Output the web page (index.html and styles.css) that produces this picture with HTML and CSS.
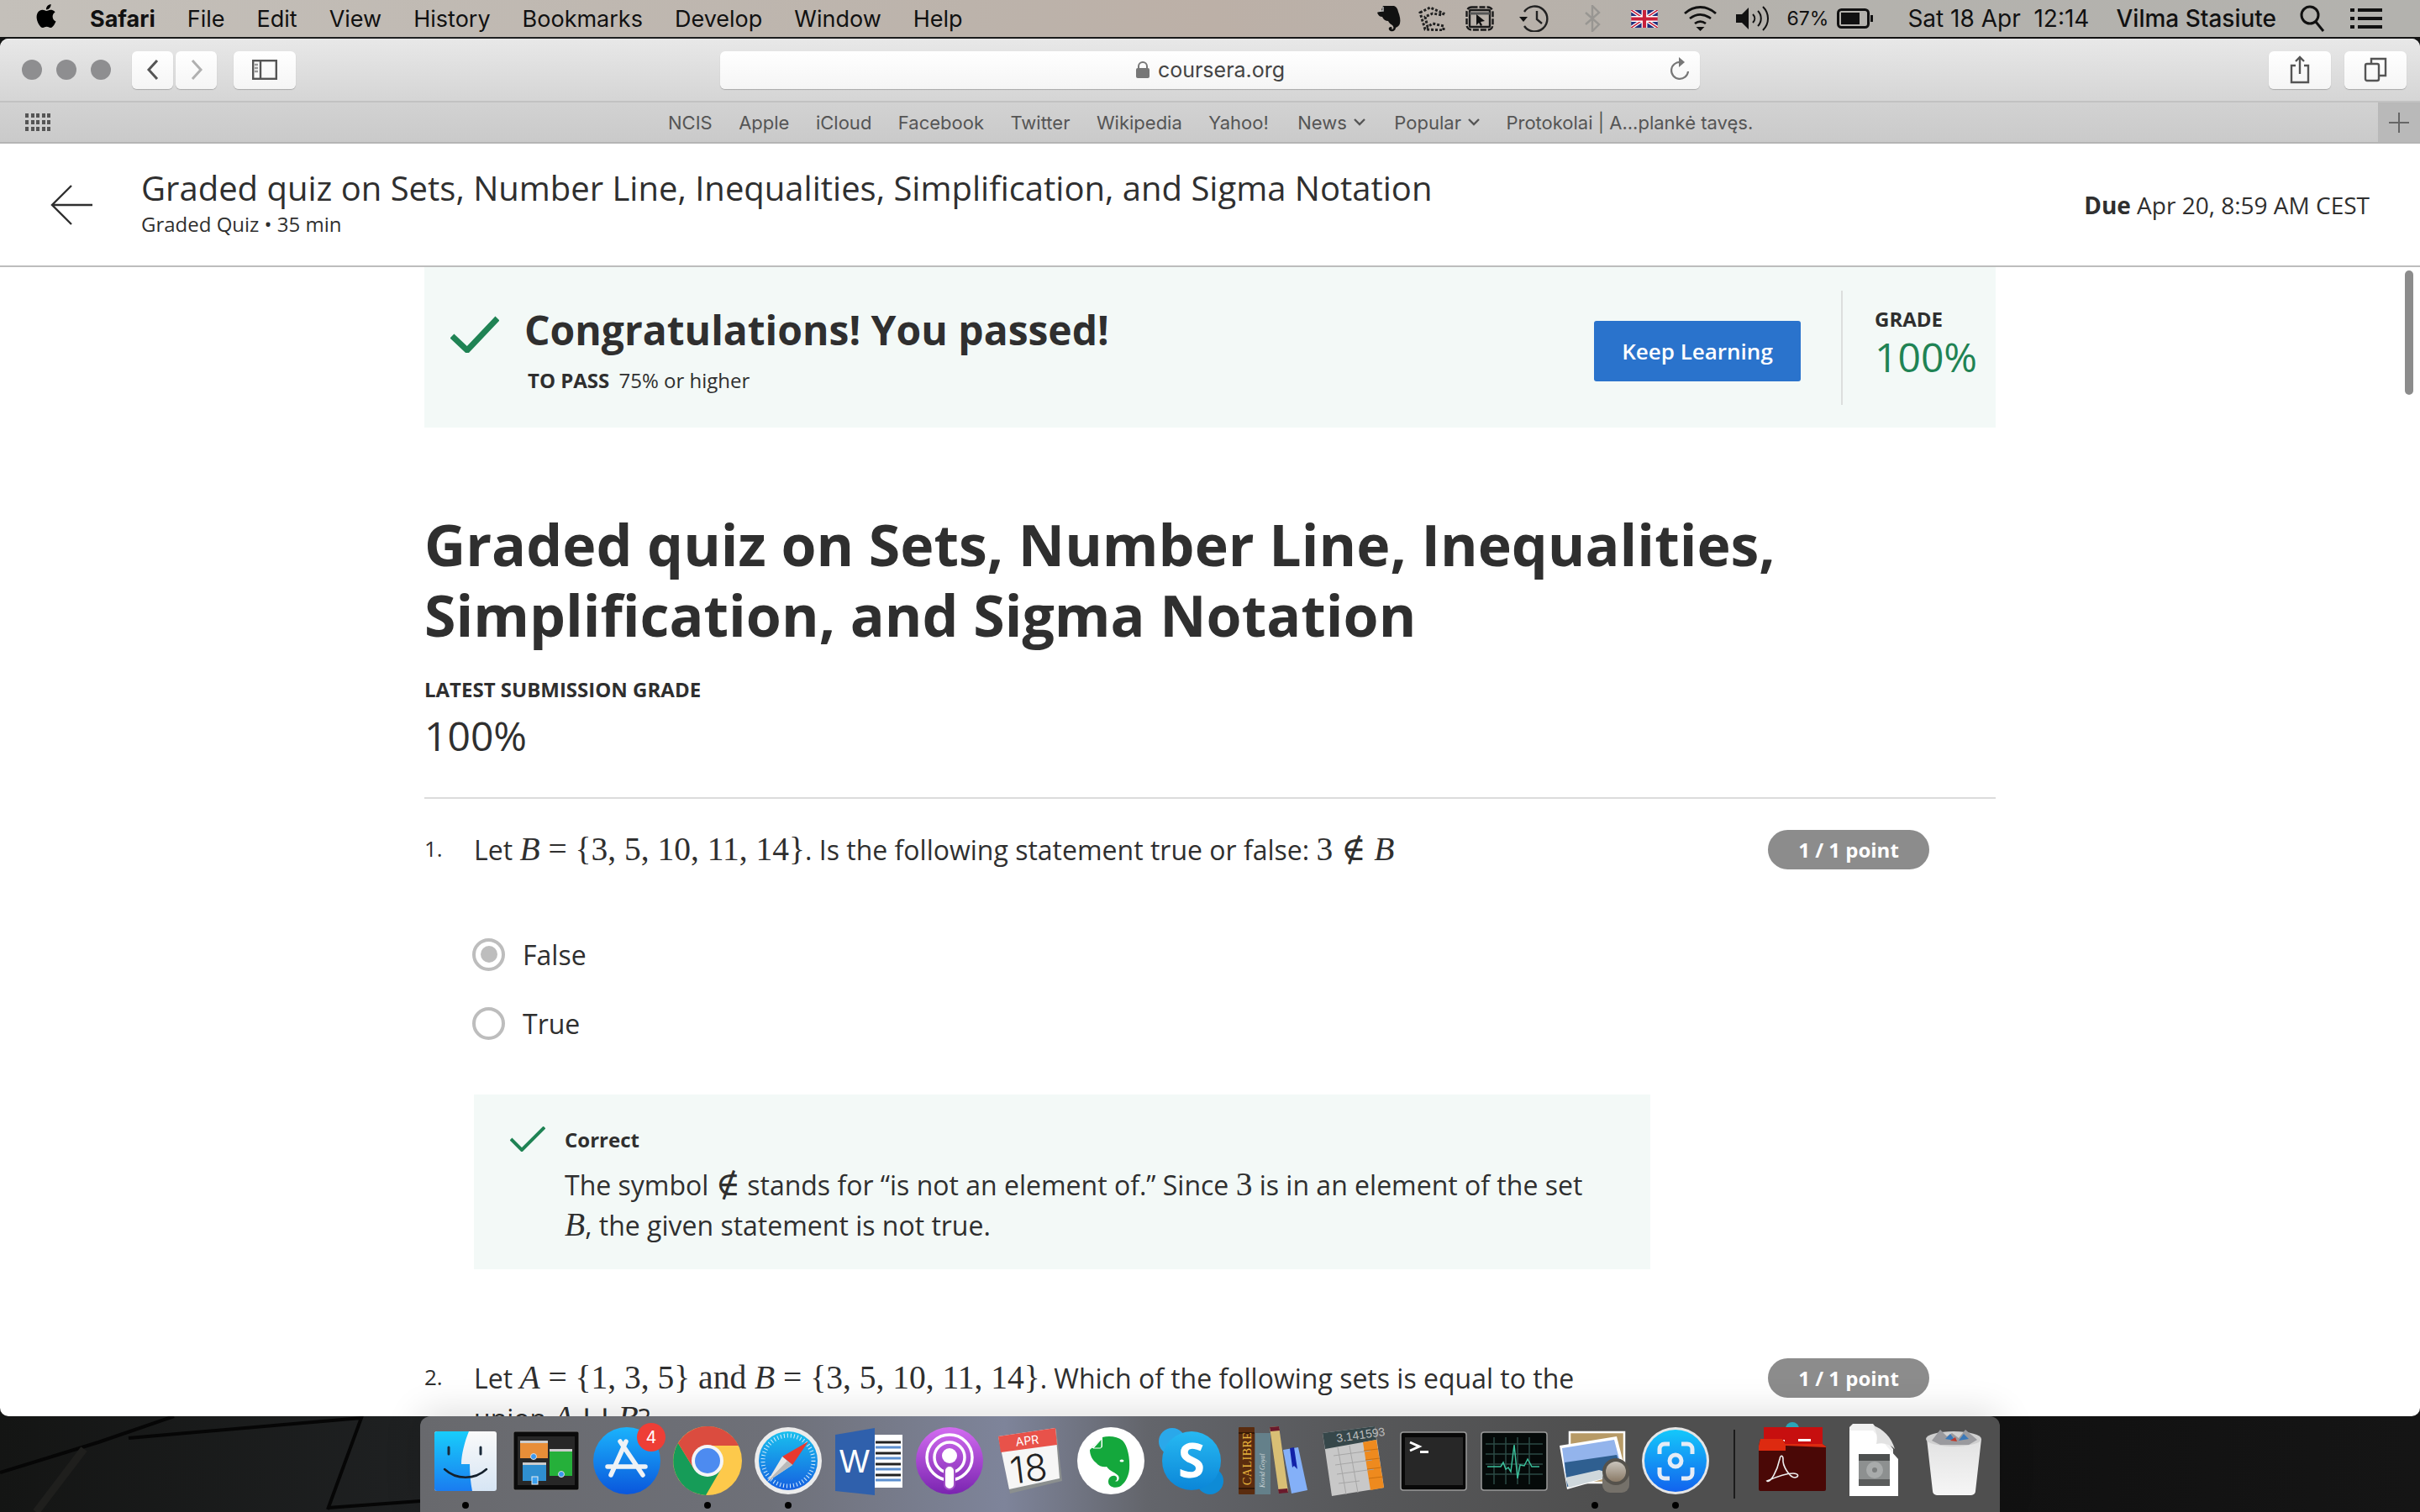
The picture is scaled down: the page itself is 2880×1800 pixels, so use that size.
FILE: index.html
```html
<!DOCTYPE html>
<html lang="en">
<head>
  <meta charset="UTF-8">
  <title>Graded quiz on Sets, Number Line, Inequalities, Simplification, and Sigma Notation</title>
  <link rel="stylesheet" href="styles.css">
</head>
<body>
  <!-- desktop wallpaper, only visible left of the dock -->
  <svg class="wall" width="500" height="114" viewBox="0 0 500 114" fill="none">
    <path d="M0 67L117 31 207 0M153 26L430 2 390 111M390 109L500 101" stroke="#060606" stroke-width="4"/>
    <path d="M100 39L43 114" stroke="#1f1f1d" stroke-width="9"/>
  </svg>

  <!-- mac menu bar -->
  <div class="menubar">
    <div class="menu-left">
      <svg class="apple" viewBox="0 0 24 24"><path d="M12.152 6.896c-.948 0-2.415-1.078-3.96-1.04-2.04.027-3.91 1.183-4.961 3.014-2.117 3.675-.546 9.103 1.519 12.09 1.013 1.454 2.208 3.09 3.792 3.039 1.52-.065 2.09-.987 3.935-.987 1.831 0 2.35.987 3.96.948 1.637-.026 2.676-1.48 3.676-2.948 1.156-1.688 1.636-3.325 1.662-3.415-.039-.013-3.182-1.221-3.22-4.857-.026-3.04 2.48-4.494 2.597-4.559-1.429-2.09-3.623-2.324-4.39-2.376-2-.156-3.675 1.09-4.61 1.09zM15.53 3.83c.843-1.012 1.4-2.427 1.245-3.83-1.207.052-2.662.805-3.532 1.818-.78.896-1.454 2.338-1.273 3.714 1.338.104 2.715-.688 3.559-1.701"/></svg>
      <b>Safari</b><span>File</span><span>Edit</span><span>View</span><span>History</span><span>Bookmarks</span><span>Develop</span><span>Window</span><span>Help</span>
    </div>
    <div class="menu-right">
      <svg class="st" width="28" height="32" viewBox="0 0 28 32"><path d="M7 1h13c3 1 4 3 5 7 2 5 3 10 2 14-1 3-3 4-5 5 0 3-3 5-6 4-3-1-3-5 0-5 2 0 2 2 1 3 3 0 3-3 1-5-2-1-4-3-5-5-3 0-6-2-7-5-3 0-5-2-6-5 1-1 3-1 5-1 0-3 1-5 2-7z" fill="#111"/><path d="M7 2v5H2" fill="none" stroke="#bbb" stroke-width="1.500"/></svg>
      <svg class="st sp-s" width="32" height="30" viewBox="0 0 32 30" fill="none" stroke="#222" stroke-width="3" stroke-dasharray="3 2"><path d="M2 8L14 2l16 7-1 2-12-2-9 4 3 12 6-4 13 3v5L8 28z"/></svg>
      <svg class="st sp-m" width="34" height="30" viewBox="0 0 34 30" fill="none" stroke="#1a1a1a" stroke-width="2.400"><rect x="1.500" y="1.500" width="31" height="27" rx="6" stroke-dasharray="7 2"/><rect x="5" y="5" width="24" height="20" rx="1"/><path d="M5 9h24" stroke="#555" stroke-width="3"/><path d="M13 10l10 8-5 1 2 4-2 1-2-4-3 3z" fill="#111" stroke="none"/></svg>
      <svg class="st sp-l" width="37" height="32" viewBox="0 0 37 32" fill="none" stroke="#222" stroke-width="2.400"><path d="M6 8a15 15 0 1 1 0 17"/><path d="M21 7v10l6 5"/><path d="M0 14h10l-5 6z" fill="#111" stroke="none"/></svg>
      <svg class="st sp-xl" width="19" height="32" viewBox="0 0 19 32" fill="none" stroke="#989692" stroke-width="2.400"><path d="M1 9l16 14-8 8V1l8 8L1 23"/></svg>
      <svg class="st sp-f" width="32" height="21" viewBox="0 0 60 40"><rect width="60" height="40" fill="#1f2e7c"/><path d="M0 0l60 40M60 0L0 40" stroke="#fff" stroke-width="8"/><path d="M0 0l60 40M60 0L0 40" stroke="#c8203a" stroke-width="3"/><path d="M30 0v40M0 20h60" stroke="#fff" stroke-width="13"/><path d="M30 0v40M0 20h60" stroke="#c8203a" stroke-width="8"/></svg>
      <svg class="st sp-l" width="41" height="30" viewBox="0 0 41 30" fill="none" stroke="#111" stroke-width="2.800"><path d="M2 9c11-10 26-10 37 0M8 15c8-6 17-6 25 0M14 21c4-3 9-3 13 0"/><path d="M20.500 30l-5-5h10z" fill="#111" stroke="none"/></svg>
      <svg class="st sp-s" width="41" height="30" viewBox="0 0 41 30" fill="none" stroke="#111" stroke-width="2"><path d="M1 10h7l8-8v26l-8-8H1z" fill="#111" stroke="none"/><path d="M21 10c3 3 3 7 0 10M27 6c5 5 5 13 0 18M33 1c8 8 8 20 0 28"/></svg>
      <span class="pct">67%</span>
      <svg class="st batt" width="44" height="24" viewBox="0 0 44 24"><rect x="1.500" y="1.500" width="36" height="21" rx="4" fill="none" stroke="#111" stroke-width="3"/><rect x="5" y="5" width="22" height="14" fill="#111"/><rect x="40" y="8" width="3" height="8" fill="#111"/></svg>
      <span class="date">Sat 18 Apr&nbsp; 12:14</span>
      <span class="user">Vilma Stasiute</span>
      <svg class="st sp-u" width="30" height="32" viewBox="0 0 30 32" fill="none" stroke="#111" stroke-width="3"><circle cx="12" cy="12" r="10"/><path d="M19 20l9 11"/></svg>
      <svg class="st sp-l" width="38" height="26" viewBox="0 0 38 26" fill="#111"><rect y="1" width="5" height="4"/><rect x="9" y="1" width="29" height="4"/><rect y="11" width="5" height="4"/><rect x="9" y="11" width="29" height="4"/><rect y="21" width="5" height="4"/><rect x="9" y="21" width="29" height="4"/></svg>
    </div>
  </div>

  <div class="window">
    <div class="toolbar">
      <div class="lights"><i></i><i></i><i></i></div>
      <div class="nav-btns">
        <button class="tb-btn nav"><svg width="16" height="26" viewBox="0 0 16 26" fill="none" stroke="#555" stroke-width="3"><path d="M13 2L3 13l10 11"/></svg></button>
        <button class="tb-btn nav"><svg width="16" height="26" viewBox="0 0 16 26" fill="none" stroke="#b0b0b0" stroke-width="3"><path d="M3 2l10 11L3 24"/></svg></button>
      </div>
      <button class="tb-btn side"><svg width="30" height="24" viewBox="0 0 30 24" fill="none" stroke="#555" stroke-width="2.400"><rect x="1.200" y="1.200" width="27.600" height="21.600"/><path d="M10 1v22"/><path d="M3 6h4M3 10h4M3 14h4" stroke="#999"/></svg></button>
      <div class="address">
        <span class="url"><svg width="18" height="22" viewBox="0 0 18 22"><path d="M4 10V7a5 5 0 0 1 10 0v3" fill="none" stroke="#777" stroke-width="2"/><rect x="1" y="9" width="16" height="12" rx="2" fill="#777"/></svg>coursera.org</span>
        <svg class="reload" width="24" height="32" viewBox="0 0 24 32" fill="none" stroke="#777" stroke-width="2.200"><path d="M13 7a10 10 0 1 0 9 11"/><path d="M11 1l7 6-7 6z" fill="#777" stroke="none"/></svg>
      </div>
      <button class="tb-btn act share"><svg width="24" height="34" viewBox="0 0 24 34" fill="none" stroke="#555" stroke-width="2.400"><path d="M7 12H2v20h20V12h-5M12 22V2M7 7l5-5 5 5"/></svg></button>
      <button class="tb-btn act"><svg width="28" height="30" viewBox="0 0 28 30" fill="none" stroke="#555" stroke-width="2.400"><rect x="2" y="8" width="16" height="20" rx="2"/><path d="M9 8V2h17v20h-8"/></svg></button>
    </div>

    <div class="favbar">
      <div class="grid-icon"><i></i><i></i><i></i><i></i><i></i><i></i><i></i><i></i><i></i><i></i><i></i><i></i><i></i><i></i><i></i></div>
      <div class="favs">
        <span>NCIS</span><span>Apple</span><span>iCloud</span><span>Facebook</span><span>Twitter</span><span>Wikipedia</span><span>Yahoo!</span>
        <span class="fav-menu">News <svg width="14" height="9" viewBox="0 0 14 9" fill="none" stroke="#555" stroke-width="2.400"><path d="M1 1l6 6 6-6"/></svg></span>
        <span class="fav-menu">Popular <svg width="14" height="9" viewBox="0 0 14 9" fill="none" stroke="#555" stroke-width="2.400"><path d="M1 1l6 6 6-6"/></svg></span>
        <span>Protokolai | A...plankė tavęs.</span>
      </div>
      <div class="newtab"><svg width="24" height="24" viewBox="0 0 24 24" stroke="#666" stroke-width="2"><path d="M12 0v24M0 12h24"/></svg></div>
    </div>

    <div class="page">
      <header class="quiz-head">
        <svg class="back" width="50" height="48" viewBox="0 0 50 48" fill="none" stroke="#2f2f2f" stroke-width="2.400"><path d="M25 1L2 24l23 23M2 24h48"/></svg>
        <div class="quiz-titles">
          <div class="quiz-title">Graded quiz on Sets, Number Line, Inequalities, Simplification, and Sigma Notation</div>
          <div class="quiz-sub">Graded Quiz • 35 min</div>
        </div>
        <div class="due"><b>Due</b> Apr 20, 8:59 AM CEST</div>
      </header>

      <div class="scroll">
        <div class="column">
          <section class="banner">
            <svg class="banner-check" width="58" height="44" viewBox="0 0 58 44" fill="none" stroke="#1f8354" stroke-width="7"><path d="M2 24l18 17L56 3"/></svg>
            <div class="banner-text">
              <div class="congrats">Congratulations! You passed!</div>
              <div class="topass"><b>TO PASS</b> 75% or higher</div>
            </div>
            <button class="keep">Keep Learning</button>
            <div class="grade-box">
              <div class="grade-label">GRADE</div>
              <div class="grade-val">100%</div>
            </div>
          </section>

          <h1>Graded quiz on Sets, Number Line, Inequalities, Simplification, and Sigma Notation</h1>
          <div class="latest-label">LATEST SUBMISSION GRADE</div>
          <div class="latest-val">100%</div>
          <hr>

          <div class="question">
            <span class="num">1.</span>
            <div class="q-text">Let <span class="m"><i>B</i> = {3, 5, 10, 11, 14}</span>. Is the following statement true or false: <span class="m">3 ∉ <i>B</i></span></div>
            <span class="pill">1 / 1 point</span>
          </div>
          <div class="option"><span class="radio on"></span>False</div>
          <div class="option"><span class="radio"></span>True</div>
          <div class="feedback">
            <svg width="42" height="30" viewBox="0 0 42 30" fill="none" stroke="#1f8354" stroke-width="4"><path d="M1 15l13 13L41 1"/></svg>
            <div class="fb-body">
              <div class="fb-title">Correct</div>
              <div class="fb-text">The symbol <span class="m">∉</span> stands for “is not an element of.” Since <span class="m">3</span> is in an element of the set <span class="m"><i>B</i></span>, the given statement is not true.</div>
            </div>
          </div>

          <div class="question q2">
            <span class="num">2.</span>
            <div class="q-text">Let <span class="m"><i>A</i> = {1, 3, 5} and <i>B</i> = {3, 5, 10, 11, 14}</span>. Which of the following sets is equal to the union <span class="m"><i>A</i> ∪ <i>B</i></span>?</div>
            <span class="pill">1 / 1 point</span>
          </div>
        </div>
        <div class="thumb"></div>
      </div>
    </div>
  </div>

  <!-- dock -->
  <div class="dock">
    <div class="slot run"><svg viewBox="0 0 80 80">
      <defs><linearGradient id="fin" x1="0" y1="0" x2="0" y2="1"><stop offset="0" stop-color="#18cdfb"/><stop offset="1" stop-color="#1a7cf0"/></linearGradient><linearGradient id="fin2" x1="0" y1="0" x2="0" y2="1"><stop offset="0" stop-color="#fafafa"/><stop offset="1" stop-color="#d6e5f4"/></linearGradient></defs>
      <rect x="3" y="5" width="74" height="71" rx="3" fill="url(#fin2)"/>
      <path d="M6 5h38c-5 12-9 28-9 39h10c0 10 1 22 3 32H6a3 3 0 0 1-3-3V8a3 3 0 0 1 3-3z" fill="url(#fin)"/>
      <path d="M20 24v8M58 24v8" stroke="#1a2a3a" stroke-width="3" stroke-linecap="round"/>
      <path d="M15 50c14 13 36 13 50 0" fill="none" stroke="#14202c" stroke-width="2.500" stroke-linecap="round"/>
    </svg></div>
    <div class="slot"><svg viewBox="0 0 80 80">
      <rect x="1" y="5" width="78" height="70" rx="2" fill="#0b0b0b" stroke="#777"/>
      <rect x="6" y="11" width="68" height="58" fill="#272727"/>
      <rect x="9" y="16" width="33" height="21" fill="#e88e38"/><rect x="9" y="16" width="33" height="3" fill="#ccc"/>
      <rect x="44" y="26" width="27" height="32" fill="#25b03a"/><rect x="44" y="26" width="27" height="3" fill="#ccc"/>
      <rect x="12" y="42" width="28" height="22" fill="#2f8fd0"/><rect x="12" y="42" width="28" height="3" fill="#ccc"/>
      <circle cx="25" cy="35" r="3.500" fill="#3a98f0" stroke="#ddd"/><circle cx="58" cy="56" r="3.500" fill="#3a98f0" stroke="#ddd"/>
      <rect x="23" y="59" width="7" height="9" fill="#3aa0f0" stroke="#eee"/>
    </svg></div>
    <div class="slot"><svg viewBox="0 0 80 80">
      <defs><linearGradient id="app" x1="0" y1="0" x2="0" y2="1"><stop offset="0" stop-color="#1bb3fc"/><stop offset="1" stop-color="#0a56dc"/></linearGradient></defs>
      <circle cx="40" cy="40" r="40" fill="url(#app)"/>
      <path d="M39 17L21 57M32 17l27 40M17 47h45" stroke="#eef2f6" stroke-width="5.500" stroke-linecap="round" fill="none"/>
    </svg><span class="badge">4</span></div>
    <div class="slot run"><svg viewBox="0 0 80 80">
      <circle cx="40" cy="40" r="41" fill="#fdc94b"/>
      <path d="M5 19A41 41 0 0 0 38 81L56 50H24z" fill="#169c58"/>
      <path d="M5 19A41 41 0 0 1 77 22H40L24 50z" fill="#db4c3f"/>
      <circle cx="40" cy="40" r="19" fill="#f5f5f5"/><circle cx="40" cy="40" r="15" fill="#4d8bf0"/>
    </svg></div>
    <div class="slot run"><svg viewBox="0 0 80 80">
      <defs><linearGradient id="saf" x1="0" y1="0" x2="0" y2="1"><stop offset="0" stop-color="#19c0ee"/><stop offset="1" stop-color="#1660e0"/></linearGradient></defs>
      <circle cx="40" cy="40" r="40" fill="#ececec"/><circle cx="40" cy="40" r="35" fill="url(#saf)"/>
      <circle cx="40" cy="40" r="30" fill="none" stroke="#d8ecfb" stroke-width="5" stroke-dasharray="1 3"/>
      <path d="M64 17L33 35l12 10z" fill="#e8392f"/><path d="M15 65l18-30 12 10z" fill="#e6e6e6"/><path d="M15 65l30-20-6-5z" fill="#b9b9b9"/>
    </svg></div>
    <div class="slot"><svg viewBox="0 0 80 80">
      <rect x="46" y="9" width="34" height="63" fill="#fff"/>
      <path d="M48 18h30M48 31h30M48 44h30M48 57h30" stroke="#222" stroke-width="3"/><path d="M48 24h30M48 37h30M48 50h30M48 63h30" stroke="#5c8fd0" stroke-width="3"/>
      <path d="M0 9L47 1v80L0 76z" fill="#2f60ac"/><text x="23" y="54" class="word-w">W</text>
    </svg></div>
    <div class="slot"><svg viewBox="0 0 80 80">
      <defs><linearGradient id="pod" x1="0" y1="0" x2="0" y2="1"><stop offset="0" stop-color="#d26cf0"/><stop offset="1" stop-color="#7a24b0"/></linearGradient></defs>
      <circle cx="40" cy="40" r="40" fill="url(#pod)"/>
      <circle cx="40" cy="36" r="27" fill="none" stroke="#fff" stroke-width="3.500"/><circle cx="40" cy="36" r="18" fill="none" stroke="#fff" stroke-width="3.500"/>
      <circle cx="40" cy="34" r="9" fill="#fff"/><rect x="34" y="46" width="12" height="28" rx="6" fill="#fff" stroke="#a24fc7" stroke-width="2"/>
    </svg></div>
    <div class="slot"><svg viewBox="0 0 80 80">
      <path d="M3 13L71 2l7 62-62 15z" fill="#8b8f8f"/><path d="M2 11L70 1l5 60-60 13z" fill="#f6f6f6"/>
      <path d="M2 11L70 1l2 20L5 30z" fill="#e8524a"/>
      <text class="cal-m" transform="translate(37 21) rotate(-7)">APR</text>
      <text class="cal-d" transform="translate(40 65) rotate(-7)">18</text>
    </svg></div>
    <div class="slot"><svg viewBox="0 0 80 80">
      <circle cx="40" cy="40" r="40" fill="#fff"/>
      <path d="M30 12c8-2 18-1 24 4 6 6 9 21 8 34-1 10-6 18-12 21-6 2-13 0-13-6 0-5 4-8 8-7 3 1 3 6 0 6 3 2 6-2 4-6-3-4-10-5-14-11-3 1-9 0-13-5-4-3-7-9-7-15z" fill="#14a83c"/>
      <path d="M30 11L17 25h10c2 0 3-1 3-3z" fill="#fff"/><path d="M29 14L19 25h8c1 0 2-1 2-3z" fill="#14a83c" stroke="#fff" stroke-width="1"/>
      <ellipse cx="53" cy="40" rx="2.500" ry="1.500" fill="#fff"/>
    </svg></div>
    <div class="slot"><svg viewBox="0 0 80 80">
      <defs><linearGradient id="sky" x1="0" y1="0" x2="0" y2="1"><stop offset="0" stop-color="#27b9f2"/><stop offset="1" stop-color="#0b86d8"/></linearGradient></defs>
      <circle cx="17" cy="17" r="16" fill="#2aa8ea"/><circle cx="62" cy="64" r="16" fill="#0e8bd6"/><circle cx="40" cy="40" r="35" fill="url(#sky)"/>
      <text x="40" y="60" class="skype-s">S</text>
    </svg></div>
    <div class="slot"><svg viewBox="0 0 80 80">
      <rect x="0" y="0" width="19" height="80" rx="1" fill="#5a2c0f"/><path d="M0 7h19M0 73h19" stroke="#2a1205" stroke-width="1.500"/>
      <text class="cal-t" transform="translate(15 69) rotate(-90)">CALIBRE</text>
      <rect x="20" y="7" width="18" height="73" fill="#64808a"/><text class="gogol" transform="translate(31 72) rotate(-90)">Kovid Goyal</text>
      <path d="M37 0l11-1 11 78-11 1z" fill="#d9bf75"/><path d="M37 0l11-1 1 5-11 1zM47 74l11-1 1 5-11 1z" fill="#6a1a2c"/>
      <path d="M53 27l18-3 11 51-19 4z" fill="#84b0f8"/><path d="M61 25l5-1 4 26-4-4-2 2z" fill="#1222a8"/>
    </svg></div>
    <div class="slot"><svg viewBox="0 0 80 80">
      <path d="M4 7L66-1l11 73-62 10z" fill="#c8c8c8"/><path d="M4 7L66-1l2 16L7 26z" fill="#36474a"/>
      <path d="M52 18l16-3 9 57-16 3z" fill="#ee8a1e"/>
      <path d="M17 34l44-6M19 45l44-6M21 56l44-6M23 67l25-3M22 24l10 56M36 22l10 56" stroke="#a6a6a6" stroke-width="1"/>
      <path d="M53 28l17-2M55 39l17-2M57 50l17-2M59 61l17-2" stroke="#c96f10" stroke-width="1"/>
      <text class="calc-t" transform="translate(21 18) rotate(-8)">3.141593</text>
    </svg></div>
    <div class="slot"><svg viewBox="0 0 80 80">
      <rect x="1" y="6" width="78" height="69" rx="3" fill="#080808" stroke="#9a9a9a" stroke-width="1.500"/><rect x="6" y="12" width="69" height="57" fill="#272727"/>
      <path d="M12 18l11 5-11 5" fill="none" stroke="#fff" stroke-width="3"/><rect x="24" y="28" width="10" height="3" fill="#fff"/>
    </svg></div>
    <div class="slot"><svg viewBox="0 0 80 80">
      <rect x="1" y="6" width="78" height="69" rx="3" fill="#050a09" stroke="#9a9a9a" stroke-width="1.500"/>
      <path d="M6 20h68M6 32h68M6 44h68M6 56h68M16 12v56M30 12v56M44 12v56M58 12v56" stroke="#2b4a44" stroke-width="1.500"/>
      <path d="M8 47h16l3-5 3 8 3-2 3 5 4-32 4 40 3-16 5 1 4-8 5 9h9" fill="none" stroke="#3bbf9a" stroke-width="1.500"/>
    </svg></div>
    <div class="slot run"><svg viewBox="0 0 80 80">
      <defs><linearGradient id="lens" x1="0" y1="0" x2="0" y2="1"><stop offset="0" stop-color="#c9c4bc"/><stop offset="1" stop-color="#8a7a66"/></linearGradient></defs>
      <rect x="10" y="6" width="65" height="60" fill="#b79a66" stroke="#fff" stroke-width="2.500"/>
      <path d="M-2 22l68-11 11 43-70 20z" fill="#fff"/><path d="M1 25l62-10 8 30-66 10z" fill="#93b4ec"/>
      <path d="M4 42l62-9 7 20-66 18z" fill="#2f5f90"/><path d="M5 60l40-9 20 6-56 15z" fill="#cfd8dc"/>
      <rect x="49" y="52" width="32" height="26" rx="9" fill="#75716a"/><circle cx="65" cy="53" r="16" fill="#55524c"/><circle cx="65" cy="53" r="12" fill="url(#lens)"/>
    </svg></div>
    <div class="slot run"><svg viewBox="0 0 80 80">
      <defs><linearGradient id="shot" x1="0" y1="0" x2="0" y2="1"><stop offset="0" stop-color="#14c8fb"/><stop offset="1" stop-color="#1263ee"/></linearGradient></defs>
      <circle cx="40" cy="40" r="40" fill="#e6e6e6"/><circle cx="40" cy="40" r="37" fill="url(#shot)"/>
      <path d="M21 32v-6a6 6 0 0 1 6-6h6M47 20h7a6 6 0 0 1 6 6v6M60 48v7a6 6 0 0 1-6 6h-7M33 61h-6a6 6 0 0 1-6-6v-7" fill="none" stroke="#e4ecf6" stroke-width="5"/>
      <circle cx="40" cy="40" r="7" fill="none" stroke="#e4ecf6" stroke-width="5"/>
    </svg></div>
    <div class="dock-sep"></div>
    <div class="slot"><svg viewBox="0 0 80 80">
      <circle cx="40" cy="2" r="8" fill="#2aa6b8"/>
      <path d="M6 0h70v26H6z" fill="#c70f0f"/><path d="M47 14h15v3H47zM25 15h6v2h-6z" fill="#fff"/>
      <path d="M0 22l2-8h26l4 6h44l4 3v51a2 2 0 0 1-2 2H2a2 2 0 0 1-2-2z" fill="#4a0806"/>
      <path d="M0 28v-6l2-8h26l4 6h44l4 3v1L32 22v6z" fill="#dd2a10"/>
      <path d="M10 64c4 3 12-12 15-26 1-6 4-4 4 0-1 8 8 22 14 22 6-1 4-5-2-5-10 0-22 5-31 9z" fill="none" stroke="#eee" stroke-width="1.600"/>
    </svg></div>
    <div class="slot"><svg viewBox="0 0 80 80">
      <path d="M16-4h24l24 30v56H12V0z" fill="#f0f0f0"/><path d="M12 4h28l30 34v44H12z" fill="#fff"/>
      <path d="M40-2c12 4 22 14 26 28-6-6-14-8-22-6 2-8 0-16-4-22z" fill="#e2e2e2"/>
      <rect x="23" y="32" width="37" height="38" rx="2" fill="#8d9090"/><rect x="23" y="32" width="37" height="8" fill="#4d5050"/><rect x="23" y="62" width="37" height="8" fill="#5a5c5c"/>
      <circle cx="42" cy="51" r="10" fill="#a8abab"/><circle cx="42" cy="51" r="3" fill="#7c7f7f"/>
    </svg></div>
    <div class="slot"><svg viewBox="0 0 80 80">
      <defs><linearGradient id="bin" x1="0" y1="0" x2="0" y2="1"><stop offset="0" stop-color="#e2e2e2"/><stop offset="1" stop-color="#f6f6f6"/></linearGradient></defs>
      <path d="M8 14h65l-7 62a5 5 0 0 1-5 5H20a5 5 0 0 1-5-5z" fill="url(#bin)"/>
      <ellipse cx="40" cy="14" rx="33" ry="9" fill="#cfcfcf"/>
      <path d="M14 16L24 3l8 8 6-4 8 6 8-10 14 12-10 6H24z" fill="#9a9a9e"/><path d="M30 14l6-6 6 8zM46 16l6-8 6 6z" fill="#3a78b8"/><path d="M36 16l6-4 2 5z" fill="#c0392b"/>
    </svg></div>
  </div>
</body>
</html>
```

FILE: styles.css
```css
html, body {
  margin: 0;
  padding: 0;
}
body {
  position: relative;
  width: 2880px;
  height: 1800px;
  overflow: hidden;
  font-family: "Open Sans", sans-serif;
  color: #2f2f2f;
  background: linear-gradient(90deg, #141514 0, #1f2122 500px, #111 2380px, #151515 100%);
}
.wall {
  position: absolute;
  left: 0;
  bottom: 0;
}

/* menu bar */
.menubar {
  position: relative;
  height: 44px;
  display: flex;
  justify-content: space-between;
  align-items: center;
  background: linear-gradient(90deg, #c4c0ba 0, #bcb3ab 40%, #bcb0a7 50%, #b4b2ad 75%, #b3b2ae 100%);
  font-family: Inter, sans-serif;
  font-size: 27px;
  color: #111;
}
.menu-left {
  display: flex;
  align-items: center;
  gap: 38px;
  padding-left: 41px;
}
.menu-left b {
  font-weight: 700;
}
.apple {
  width: 28px;
  height: 32px;
  margin-top: -6px;
}
.menu-right {
  display: flex;
  align-items: center;
  padding-right: 45px;
  font-size: 28px;
}
.st {
  flex: none;
}
.sp-s {
  margin-left: 21px;
}
.sp-m {
  margin-left: 24px;
}
.sp-l {
  margin-left: 30px;
}
.sp-xl {
  margin-left: 41px;
}
.sp-f {
  margin-left: 36px;
}
.sp-u {
  margin-left: 28px;
}
.pct {
  margin-left: 21px;
  font-size: 23px;
}
.batt {
  margin-left: 10px;
}
.date {
  margin-left: 40px;
}
.user {
  margin-left: 32px;
  font-weight: 500;
}

/* browser window */
.window {
  position: relative;
  margin-top: 2px;
  height: 1640px;
  display: flex;
  flex-direction: column;
  background: #fff;
  border-radius: 10px;
  overflow: hidden;
}
.toolbar {
  height: 74px;
  flex: none;
  display: flex;
  align-items: center;
  padding: 0 16px 0 26px;
  box-sizing: border-box;
  background: linear-gradient(#e8e8e8, #d5d5d5);
}
.lights {
  display: flex;
  gap: 17px;
}
.lights i {
  width: 24px;
  height: 24px;
  border-radius: 50%;
  background: #8e8e90;
}
.tb-btn {
  height: 45px;
  padding: 0;
  border: none;
  border-radius: 6px;
  background: linear-gradient(#fff, #f5f5f5);
  box-shadow: 0 1px 1px #aaa;
  display: flex;
  align-items: center;
  justify-content: center;
}
.nav-btns {
  display: flex;
  gap: 3px;
  margin-left: 25px;
}
.nav {
  width: 49px;
}
.side {
  width: 74px;
  margin-left: 20px;
}
.address {
  width: 1166px;
  height: 45px;
  margin-left: 505px;
  border-radius: 6px;
  background: linear-gradient(#fff, #f5f5f5);
  box-shadow: 0 1px 1px #aaa;
  display: flex;
  align-items: center;
  justify-content: center;
  position: relative;
  font-family: Inter, sans-serif;
  font-size: 25px;
  color: #444;
}
.url {
  display: flex;
  align-items: center;
  gap: 9px;
}
.reload {
  position: absolute;
  right: 12px;
  top: 6px;
}
.act {
  width: 74px;
  margin-left: 16px;
}
.act.share {
  margin-left: auto;
}
.favbar {
  height: 51px;
  flex: none;
  display: flex;
  align-items: center;
  position: relative;
  box-sizing: border-box;
  border-top: 2px solid #c2c2c2;
  border-bottom: 2px solid #b4b4b4;
  background: linear-gradient(#d2d2d2, #cacaca);
  font-family: Inter, sans-serif;
  font-size: 22px;
  color: #555;
}
.grid-icon {
  display: grid;
  grid-template-columns: repeat(5, 4px);
  gap: 3px 2.5px;
  margin-left: 30px;
}
.grid-icon i {
  width: 4px;
  height: 5px;
  background: #555;
}
.favs {
  position: absolute;
  left: 795px;
  display: flex;
  align-items: center;
  gap: 31.5px;
  white-space: nowrap;
}
.fav-menu {
  display: flex;
  align-items: center;
  gap: 8px;
  margin-left: 3px;
}
.newtab {
  position: absolute;
  right: 0;
  top: 0;
  bottom: 0;
  width: 50px;
  background: #b9b9b9;
  display: flex;
  align-items: center;
  justify-content: center;
}

/* page */
.page {
  flex: 1;
  min-height: 0;
  display: flex;
  flex-direction: column;
}
.quiz-head {
  height: 147px;
  flex: none;
  box-sizing: border-box;
  display: flex;
  align-items: center;
  padding: 0 60px;
  border-bottom: 2px solid #bdbdbd;
}
.quiz-titles {
  margin-left: 58px;
  flex: 1;
  margin-top: -7px;
}
.quiz-title {
  font-size: 40px;
  line-height: 54px;
}
.quiz-sub {
  font-size: 24px;
  line-height: 32px;
}
.due {
  font-size: 28px;
}
.due b {
  font-weight: 700;
}
.scroll {
  flex: 1;
  min-height: 0;
  position: relative;
  overflow: hidden;
}
.thumb {
  position: absolute;
  right: 8px;
  top: 4px;
  width: 10px;
  height: 148px;
  border-radius: 5px;
  background: #8c8c8c;
}
.column {
  width: 1870px;
  margin: 0 auto;
}
.banner {
  height: 191px;
  display: flex;
  align-items: center;
  background: #f3f9f7;
}
.banner-check {
  margin-left: 31px;
  margin-top: -32px;
}
.banner-text {
  flex: 1;
  margin-left: 30px;
}
.congrats {
  font-size: 48px;
  font-weight: 700;
  line-height: 68px;
}
.topass {
  font-size: 24px;
  margin-top: 9px;
  margin-left: 4px;
}
.topass b {
  margin-right: 5px;
}
.keep {
  width: 246px;
  height: 72px;
  margin-top: 8px;
  border: none;
  border-radius: 3px;
  background: #2a73cc;
  color: #fff;
  font-family: inherit;
  font-size: 26px;
  font-weight: 600;
}
.grade-box {
  height: 136px;
  margin-left: 48px;
  padding-left: 38px;
  width: 144px;
  border-left: 2px solid #dcdedd;
}
.grade-label {
  margin-top: 17px;
  font-size: 24px;
  font-weight: 700;
  line-height: 34px;
}
.grade-val {
  font-size: 48px;
  line-height: 56px;
  color: #1f8354;
}
h1 {
  margin: 97px 0 0;
  font-size: 68px;
  line-height: 84px;
  font-weight: 700;
}
.latest-label {
  margin-top: 30px;
  font-size: 24px;
  font-weight: 700;
  line-height: 34px;
}
.latest-val {
  margin-top: 6px;
  font-size: 48px;
  line-height: 64px;
}
hr {
  margin: 41px 0 0;
  border: none;
  border-top: 2px solid #dcdcdc;
}
.question {
  display: flex;
  align-items: flex-start;
  margin-top: 37px;
}
.num {
  width: 59px;
  font-size: 26px;
  line-height: 44px;
  flex: none;
}
.q-text {
  width: 1340px;
  font-size: 32px;
  line-height: 48px;
}
.m {
  font-family: "Liberation Serif", "DejaVu Serif", serif;
  font-size: 39.5px;
  line-height: 1;
}
.pill {
  width: 192px;
  height: 47px;
  margin-left: 200px;
  flex: none;
  border-radius: 24px;
  background: #8c8c8c;
  color: #fff;
  font-size: 24px;
  font-weight: 700;
  display: flex;
  align-items: center;
  justify-content: center;
}
.option {
  display: flex;
  align-items: center;
  gap: 21px;
  margin-left: 57px;
  font-size: 32px;
  height: 40px;
  margin-top: 42px;
}
.question + .option {
  margin-top: 80px;
}
.radio {
  width: 39px;
  height: 39px;
  box-sizing: border-box;
  border: 4px solid #bdbdbd;
  border-radius: 50%;
  display: flex;
  align-items: center;
  justify-content: center;
}
.radio.on::after {
  content: "";
  width: 20px;
  height: 20px;
  border-radius: 50%;
  background: #bdbdbd;
}
.feedback {
  width: 1400px;
  height: 208px;
  margin: 65px 0 0 59px;
  box-sizing: border-box;
  padding: 38px 43px;
  display: flex;
  align-items: flex-start;
  gap: 23px;
  background: #f3f9f7;
}
.feedback svg {
  flex: none;
}
.fb-body {
  width: 1240px;
}
.fb-title {
  font-size: 24px;
  font-weight: 700;
  line-height: 32px;
}
.fb-text {
  margin-top: 14px;
  font-size: 32px;
  line-height: 48px;
}
.q2 {
  margin-top: 106px;
}

/* dock */
.dock {
  position: relative;
  width: 1880px;
  height: 114px;
  margin-left: 500px;
  box-sizing: border-box;
  padding: 0 6px;
  display: flex;
  border-radius: 12px 12px 0 0;
  background: linear-gradient(90deg, #68696d 0, #6e7078 22%, #7e849a 37%, #63656b 46%, #565759 60%, #4f4f4f 75%);
  box-shadow: 0 -4px 44px rgba(0, 0, 0, 0.14);
}
.slot {
  width: 96px;
  height: 114px;
  flex: none;
  position: relative;
  box-sizing: border-box;
  padding: 13px 8px 0;
}
.slot svg {
  display: block;
  width: 80px;
  height: 80px;
  overflow: visible;
}
.slot.run::after {
  content: "";
  position: absolute;
  left: 44px;
  top: 102px;
  width: 8px;
  height: 8px;
  border-radius: 50%;
  background: #000;
}
.badge {
  position: absolute;
  left: 60px;
  top: 8px;
  width: 34px;
  height: 34px;
  border-radius: 50%;
  background: #ee3e36;
  color: #fff;
  font-family: Inter, sans-serif;
  font-size: 20px;
  display: flex;
  align-items: center;
  justify-content: center;
}
.dock-sep {
  width: 43px;
  flex: none;
  position: relative;
}
.dock-sep::after {
  content: "";
  position: absolute;
  left: 21px;
  top: 16px;
  width: 2px;
  height: 82px;
  background: #1c1c1c;
}
.word-w {
  font-family: "Liberation Sans", sans-serif;
  font-size: 38px;
  fill: #fff;
  text-anchor: middle;
}
.cal-m {
  font-family: Inter, sans-serif;
  font-size: 14px;
  fill: #fff;
  text-anchor: middle;
}
.cal-d {
  font-family: Inter, sans-serif;
  font-size: 44px;
  font-weight: 300;
  fill: #222;
  text-anchor: middle;
}
.skype-s {
  font-family: "Open Sans", sans-serif;
  font-size: 58px;
  font-weight: 700;
  fill: #fff;
  text-anchor: middle;
}
.cal-t {
  font-family: "Liberation Serif", serif;
  font-size: 14px;
  letter-spacing: 0.5px;
  fill: #e8b33c;
}
.gogol {
  font-family: "Liberation Serif", serif;
  font-size: 8px;
  font-style: italic;
  fill: #cfd8da;
}
.calc-t {
  font-family: "Liberation Sans", sans-serif;
  font-size: 14px;
  fill: #bbb;
}
```
